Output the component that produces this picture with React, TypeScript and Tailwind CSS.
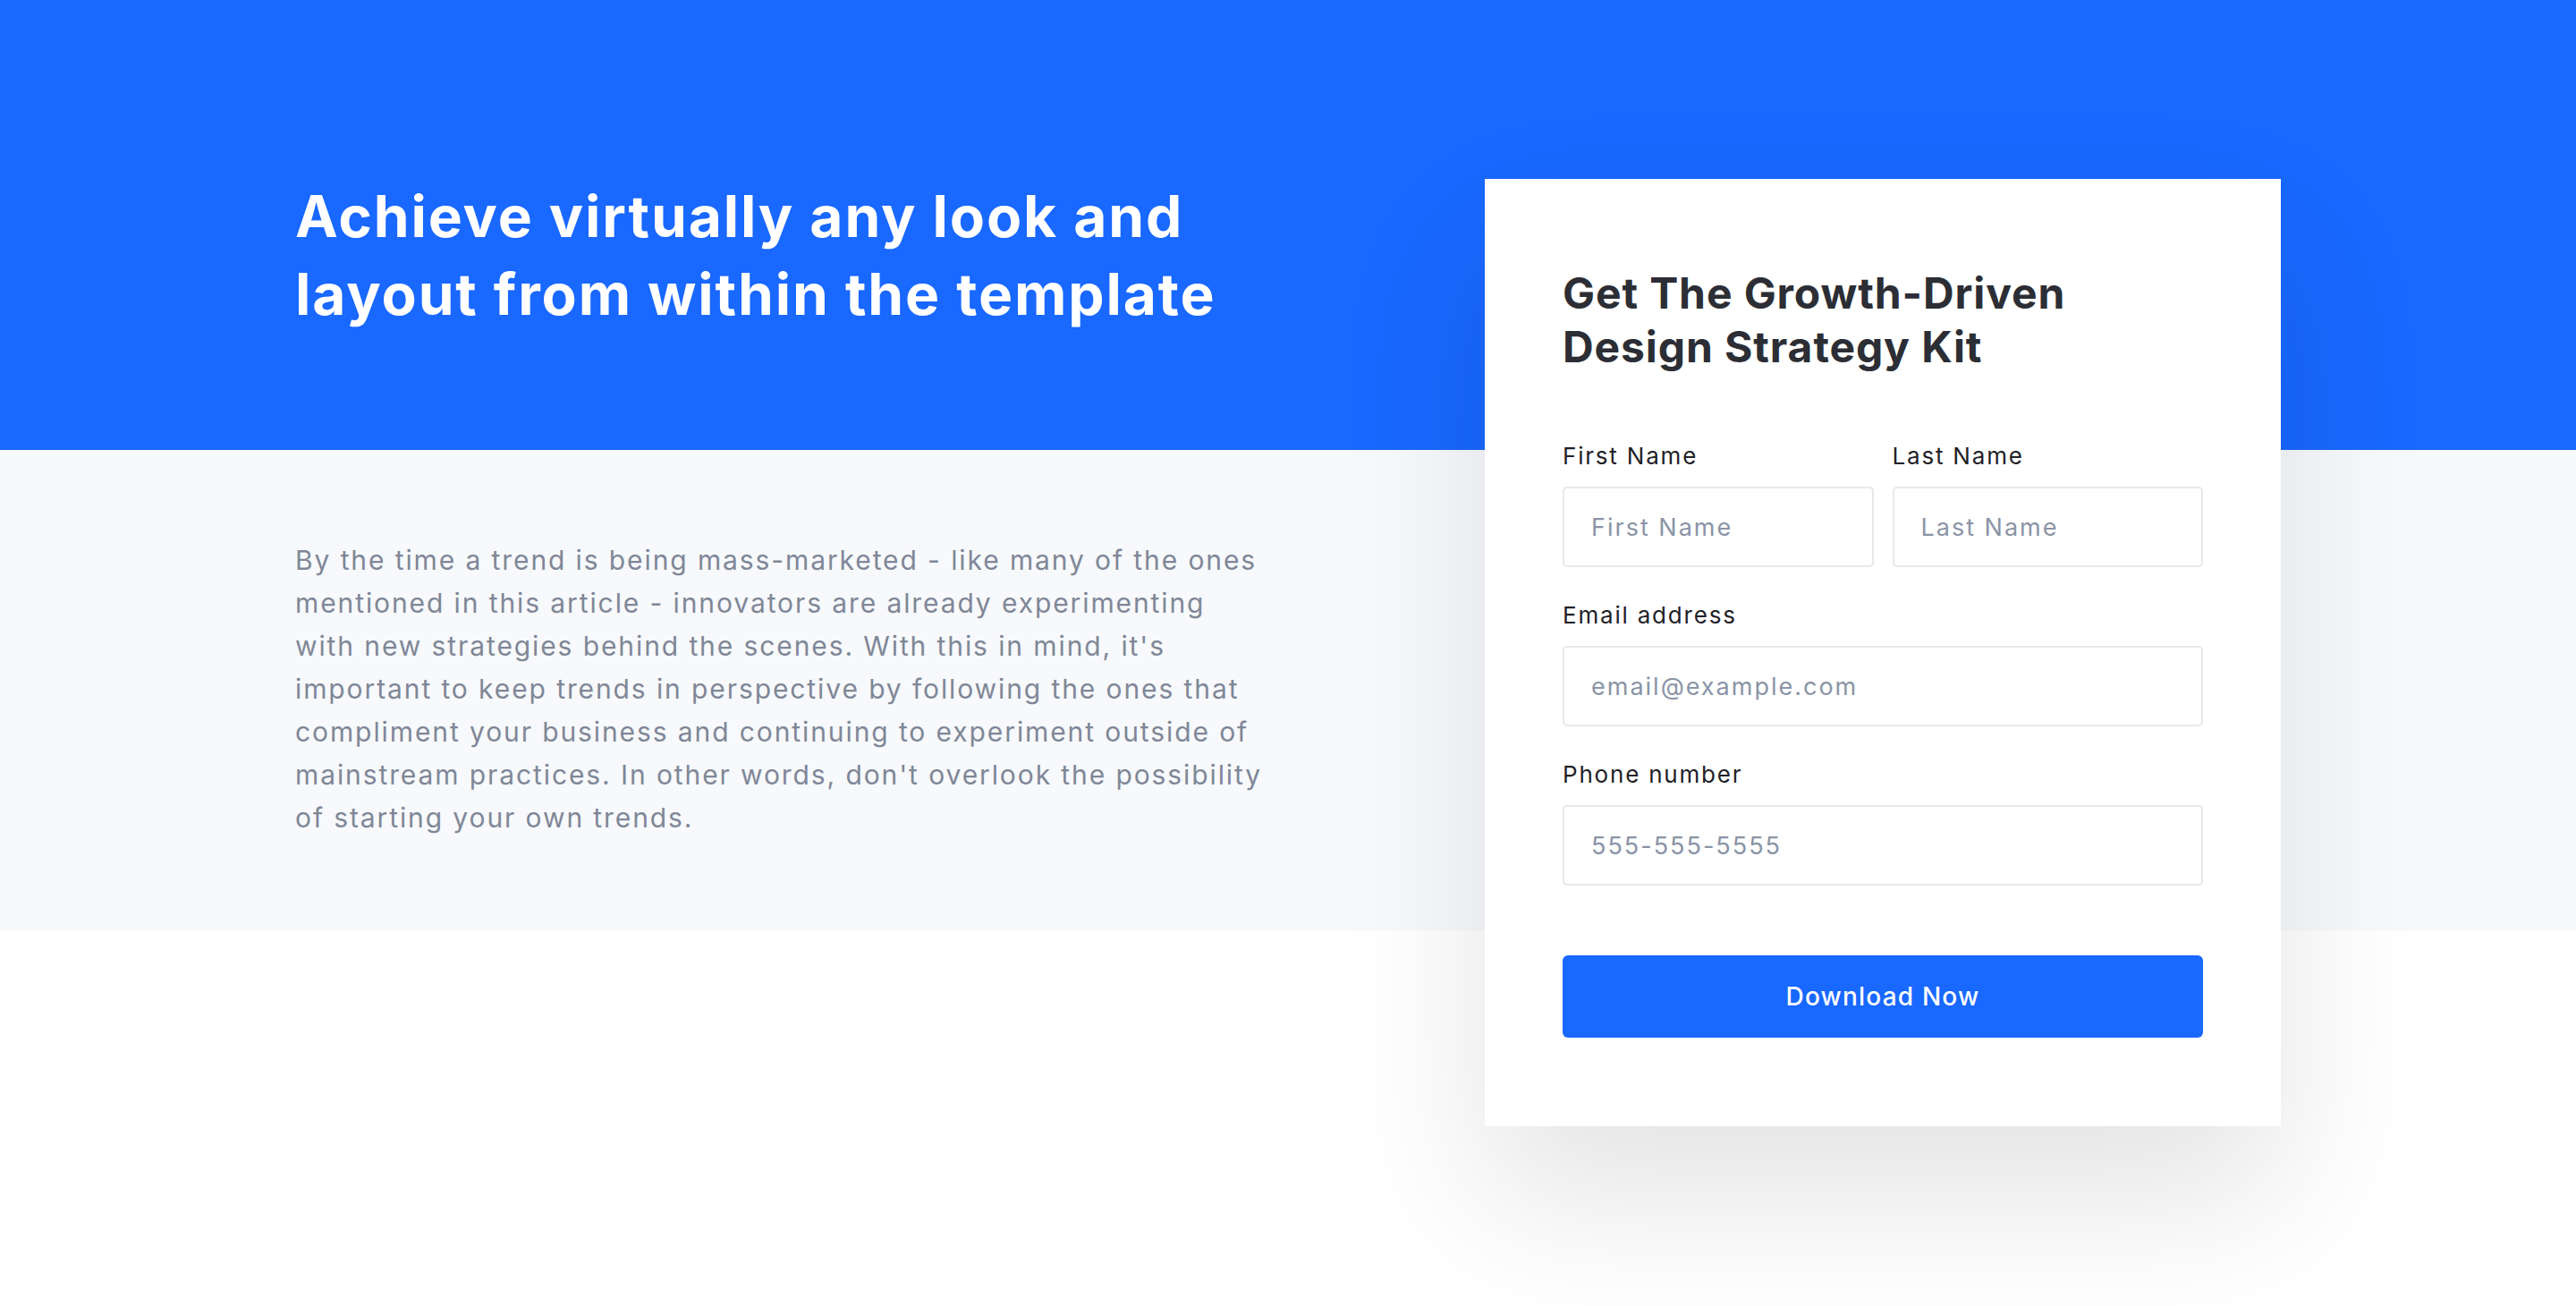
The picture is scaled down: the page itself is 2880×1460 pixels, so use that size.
import React from 'react'

const font = { fontFamily: 'Inter, "Noto Sans", sans-serif' }

function Field({ label, placeholder, type = 'text' }: { label: string; placeholder: string; type?: string }) {
  return (
    <label className="flex flex-col gap-[18px]">
      <span className="text-[26px] leading-[32px] tracking-[1.8px] text-[#1f2127]">{label}</span>
      <input
        type={type}
        placeholder={placeholder}
        className="h-[90px] w-full rounded-[5px] border-2 border-[#e6e8ec] bg-white px-[30px] text-[27px] tracking-[2px] text-[#2c2e35] outline-none placeholder:text-[#8a94a6]"
      />
    </label>
  )
}

export default function App() {
  return (
    <div
      className="min-h-[1460px] w-full bg-[linear-gradient(to_bottom,#1968ff_0px,#1968ff_503px,#f7f9fc_503px,#f7f9fc_1040px,#ffffff_1040px)]"
      style={font}
    >
      <div className="mx-auto flex w-[2220px] justify-between">
        {/* Left copy */}
        <div className="flex w-[1200px] flex-col">
          <h1 className="pt-[198px] text-[64px] font-bold leading-[87px] tracking-[1.9px] text-white">
            Achieve virtually any look and
            <br />
            layout from within the template
          </h1>
          <p className="mt-[230px] whitespace-nowrap text-[30px] leading-[48px] tracking-[1.9px] text-[#7f8797]">
            By the time a trend is being mass-marketed - like many of the ones
            <br />
            mentioned in this article - innovators are already experimenting
            <br />
            with new strategies behind the scenes. With this in mind, it's
            <br />
            important to keep trends in perspective by following the ones that
            <br />
            compliment your business and continuing to experiment outside of
            <br />
            mainstream practices. In other words, don't overlook the possibility
            <br />
            of starting your own trends.
          </p>
        </div>

        {/* Form card */}
        <div className="mt-[200px] w-[890px] self-start bg-white px-[87px] pb-[99px] pt-[98px] shadow-[0_80px_160px_rgba(0,0,0,0.11)]">
          <h2 className="text-[48px] font-bold leading-[60px] tracking-[0.9px] text-[#2c2e35]">
            Get The Growth-Driven
            <br />
            Design Strategy Kit
          </h2>

          <form className="mt-[76px] flex flex-col" onSubmit={e => e.preventDefault()}>
            <div className="grid grid-cols-2 gap-x-[21px]">
              <Field label="First Name" placeholder="First Name" />
              <Field label="Last Name" placeholder="Last Name" />
            </div>
            <div className="mt-[38px]">
              <Field label="Email address" placeholder="email@example.com" type="email" />
            </div>
            <div className="mt-[38px]">
              <Field label="Phone number" placeholder="555-555-5555" type="tel" />
            </div>
            <button
              type="submit"
              className="mt-[78px] h-[92px] w-full rounded-[6px] bg-[#1968ff] text-[28px] font-medium tracking-[1.2px] text-white"
            >
              Download Now
            </button>
          </form>
        </div>
      </div>
    </div>
  )
}
